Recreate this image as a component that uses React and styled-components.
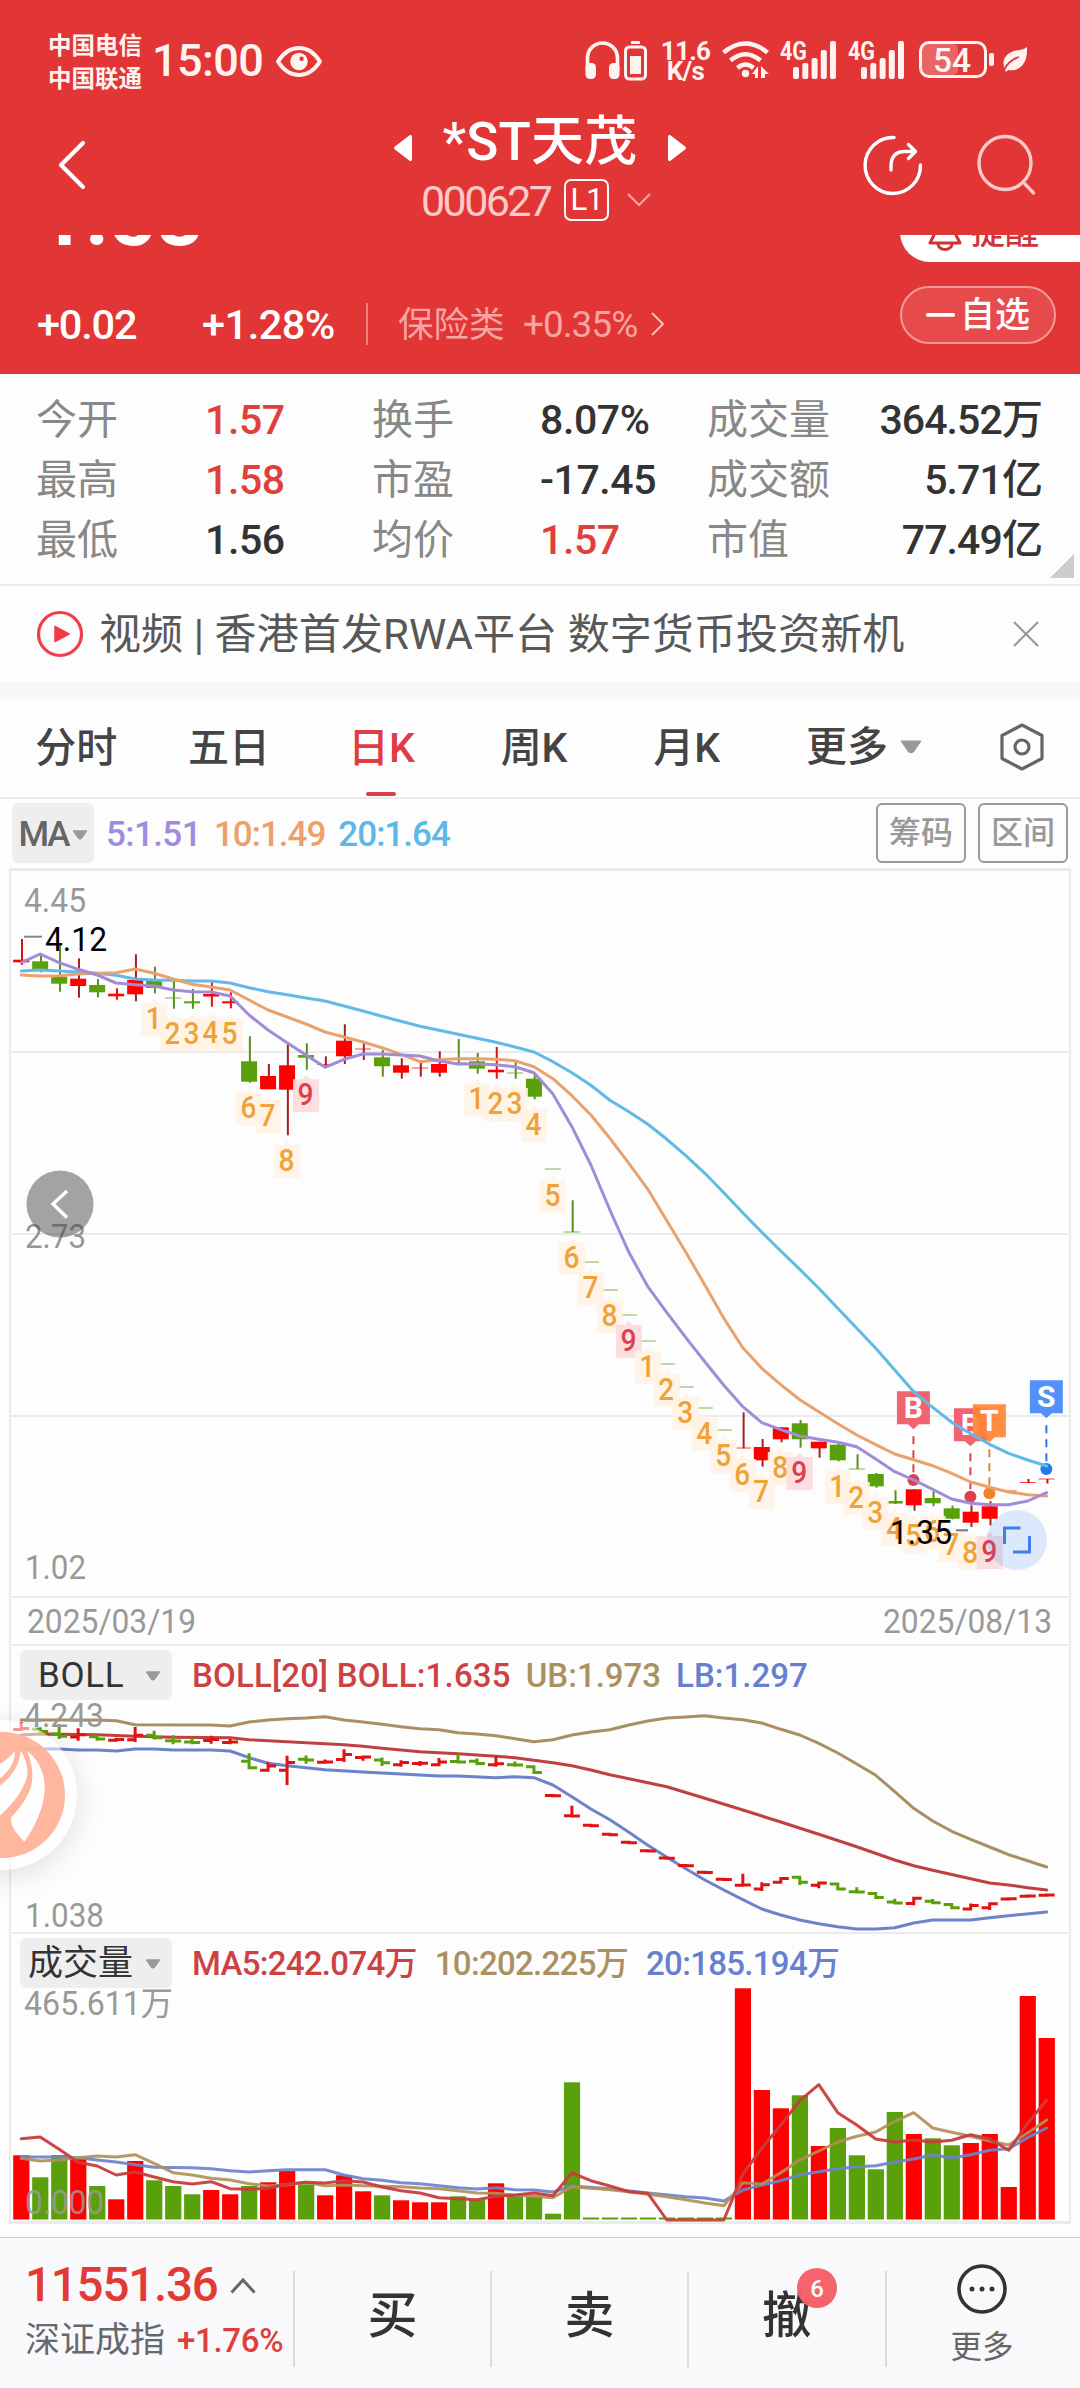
import React from 'react';
import styled, { createGlobalStyle } from 'styled-components';

const RED = '#e23536';
const UP = '#ff0000';
const DOWN = '#5aa00a';
const GRID = '#ebebeb';
const FONT = "Roboto, 'Noto Sans CJK SC', sans-serif";

const Global = createGlobalStyle`
  * { box-sizing: border-box; }
  body { margin: 0; background: #fdfdfd; font-family: ${FONT}; line-height: 1.2; }
  svg { display: block; flex: none; overflow: visible; }
`;

const Page = styled.div`
  width: 1080px;
  height: 2388px;
  display: flex;
  flex-direction: column;
  overflow: hidden;
  background: #fdfdfd;
`;

const Txt = styled.span`
  font-size: ${(p) => p.$s}px;
  letter-spacing: ${(p) => p.$ls || 0}px;
  color: ${(p) => p.$c || 'inherit'};
  font-weight: ${(p) => p.$w || 400};
  white-space: pre;
`;

/* ---------- header ---------- */
const Header = styled.header`
  height: 374px;
  background: ${RED};
  color: #fff;
  display: flex;
  flex-direction: column;
`;
const StatusBar = styled.div`
  height: 100px;
  padding: 30px 52px 0 48px;
  display: flex;
  justify-content: space-between;
  align-items: flex-start;
  color: #fff3f2;
`;
const StatusLeft = styled.div`
  display: flex;
  align-items: flex-start;
`;
const Carriers = styled.div`
  width: 96px;
  display: flex;
  flex-direction: column;
  font-size: 23.5px;
  font-weight: 700;
  line-height: 33px;
  white-space: nowrap;
`;
const Clock = styled.div`
  margin-left: 8px;
  width: 114px;
  font-size: 45px;
  font-weight: 500;
  letter-spacing: -0.6px;
  line-height: 62px;
`;
const EyeSlot = styled.div`
  margin: 16px 0 0 10px;
`;
const StatusRight = styled.div`
  display: flex;
  align-items: flex-start;
  padding-top: 11px;
`;
const Slot = styled.div`
  margin-left: ${(p) => p.$ml || 0}px;
  width: ${(p) => p.$w}px;
  padding-top: ${(p) => p.$pt || 0}px;
`;
const NetSpeed = styled.div`
  margin-left: 13px;
  width: 51px;
  display: flex;
  flex-direction: column;
  align-items: center;
  font-size: 26px;
  font-weight: 700;
  line-height: 20px;
  letter-spacing: -0.7px;
  white-space: nowrap;
`;
const NavBar = styled.div`
  height: 135px;
  padding: 10px 44px 5px 58px;
  display: grid;
  grid-template-columns: 336px 1fr 350px;
`;
const NavLeft = styled.div`
  display: flex;
  align-items: center;
  padding-bottom: 11px;
`;
const NavRight = styled.div`
  display: flex;
  align-items: center;
  justify-content: flex-end;
  gap: 54px;
  padding-bottom: 10px;
`;
const TitleCol = styled.div`
  display: flex;
  flex-direction: column;
`;
const TitleRow = styled.div`
  height: 60px;
  display: flex;
  align-items: center;
  justify-content: space-between;
  svg { margin-top: 16px; }
`;
const StockName = styled.h1`
  margin: 0;
  font-size: 53px;
  font-weight: 500;
  line-height: 60px;
  padding-top: 4px;
  letter-spacing: 0.2px;
  white-space: nowrap;
`;
const CodeRow = styled.div`
  height: 60px;
  display: flex;
  align-items: center;
  padding-left: 27px;
`;
const CodeText = styled.div`
  width: 143px;
  font-size: 43px;
  letter-spacing: -2.6px;
  padding-top: 3px;
  color: #fbc9c6;
`;
const LevelBox = styled.div`
  width: 45px;
  height: 42px;
  border: 2px solid #fff;
  border-radius: 7px;
  display: flex;
  align-items: center;
  justify-content: center;
  font-size: 31px;
  letter-spacing: -1px;
  margin-right: 18px;
`;
const ScrollPart = styled.div`
  height: 139px;
  overflow: hidden;
  display: flex;
  flex-direction: column;
  justify-content: flex-end;
  padding-bottom: 28px;
`;
const PriceRow = styled.div`
  display: flex;
  justify-content: space-between;
  align-items: flex-end;
  height: 60px;
  flex: none;
  margin-bottom: 22px;
`;
const Price = styled.div`
  padding-left: 38px;
  font-size: 83px;
  font-weight: 700;
  line-height: 60px;
  letter-spacing: -0.5px;
  margin-bottom: 15px;
`;
const RemindBtn = styled.div`
  width: 180px;
  height: 60px;
  border-radius: 30px 0 0 30px;
  background: #fff;
  color: #cf3339;
  display: flex;
  align-items: center;
  padding: 0 0 1px 28px;
  gap: 9px;
  font-size: 34px;
  font-weight: 500;
  line-height: 40px;
`;
const ChangeRow = styled.div`
  height: 62px;
  flex: none;
  display: flex;
  align-items: center;
  padding-left: 37px;
`;
const ChangeCell = styled.div`
  width: ${(p) => p.$w}px;
  font-size: ${(p) => p.$s}px;
  letter-spacing: ${(p) => p.$ls}px;
  font-weight: ${(p) => (p.$soft ? 400 : 500)};
  color: ${(p) => (p.$soft ? '#f6a5a3' : '#fff')};
  padding-top: 20px;
  white-space: nowrap;
`;
const HeadDivider = styled.div`
  width: 2px;
  height: 42px;
  margin: 17px 30px 0 0;
  background: #f0807f;
`;
const ArrowSlot = styled.div`
  padding-top: 17px;
`;
const WatchBtn = styled.div`
  margin-left: auto;
  margin-right: 24px;
  width: 156px;
  height: 58px;
  border: 2px solid #f29a99;
  border-radius: 29px;
  background: #e64a4b;
  display: flex;
  align-items: center;
  justify-content: center;
  gap: 5px;
  font-size: 35px;
  font-weight: 500;
  span { padding-top: 2px; }
`;

/* ---------- quote figures ---------- */
const Stats = styled.section`
  height: 212px;
  border-bottom: 2px solid ${GRID};
  padding-top: 16px;
  display: flex;
`;
const StatGrid = styled.div`
  display: grid;
  width: 1042px;
  padding-left: 36px;
  grid-template-columns: 169px 167px 168px 167px 131px 1fr;
  grid-auto-rows: 60px;
  font-size: 41px;
  line-height: 61px;
`;
const StatName = styled.div`
  color: #888;
  white-space: nowrap;
`;
const StatValue = styled.div`
  color: ${(p) => (p.$up ? '#e0403c' : '#333')};
  font-weight: 500;
  letter-spacing: ${(p) => (p.$right ? -0.9 : -0.4)}px;
  white-space: nowrap;
  text-align: ${(p) => (p.$right ? 'right' : 'left')};
`;
const Corner = styled.div`
  align-self: flex-end;
  margin: 0 0 6px 8px;
`;

/* ---------- news ---------- */
const News = styled.section`
  height: 96px;
  display: flex;
  align-items: center;
  padding: 0 41px 0 36px;
`;
const NewsText = styled.div`
  flex: 1;
  margin-left: 15px;
  padding-top: 2px;
  font-size: 42px;
  color: #585858;
  letter-spacing: 0.1px;
  white-space: nowrap;
`;
const Band = styled.div`
  height: 15px;
  background: #f7f7f7;
`;

/* ---------- tabs ---------- */
const Tabs = styled.nav`
  height: 102px;
  border-bottom: 2px solid ${GRID};
  display: flex;
`;
const Tab = styled.div`
  width: 152.6px;
  height: 99px;
  display: flex;
  flex-direction: column;
  align-items: center;
  justify-content: space-between;
  font-size: 41px;
  font-weight: 500;
  line-height: 88px;
  padding-top: 7px;
  color: ${(p) => (p.$on ? '#e03c46' : '#444')};
  &::after {
    content: '';
    width: 30px;
    height: 4px;
    border-radius: 2px;
    background: ${(p) => (p.$on ? '#d93f48' : 'transparent')};
  }
`;
const MoreTab = styled.div`
  padding-left: 43px;
  flex: 1;
  display: flex;
  align-items: center;
  gap: 12px;
  font-size: 41px;
  font-weight: 500;
  color: #444;
  span { padding-top: 2px; }
`;
const HexSlot = styled.div`
  padding-right: 35px;
  display: flex;
  align-items: center;
`;

/* ---------- chart ---------- */
const Toolbar = styled.div`
  height: 69px;
  padding: 4px 12px 5px 12px;
  display: flex;
  align-items: center;
`;
const MaPick = styled.div`
  width: 82px;
  height: 60px;
  border-radius: 6px;
  background: #eee;
  color: #666;
  font-size: 35px;
  font-weight: 500;
  letter-spacing: -2px;
  display: flex;
  align-items: center;
  justify-content: center;
  gap: 3px;
  padding-top: 3px;
`;
const MaValues = styled.div`
  flex: 1;
  display: flex;
  gap: 13px;
  padding: 4px 0 0 12px;
`;
const ToolBtn = styled.button`
  width: 90px;
  height: 60px;
  margin-left: 12px;
  border: 2px solid #999;
  border-radius: 6px;
  background: transparent;
  color: #999;
  font: 500 32px/52px ${FONT};
  padding: 0;
`;
const ChartArea = styled.section`
  position: relative;
  height: 1369px;
`;
const IndicatorBar = styled.div`
  position: absolute;
  left: 20px;
  top: ${(p) => p.$top}px;
  height: 50px;
  display: flex;
  align-items: center;
`;
const IndicatorPick = styled.div`
  width: 152px;
  height: 50px;
  border-radius: 6px;
  background: #eee;
  color: #333;
  font-size: 35px;
  letter-spacing: ${(p) => p.$ls || 0}px;
  display: flex;
  align-items: center;
  justify-content: space-between;
  padding: 1px 11px 0 ${(p) => p.$pl}px;
  margin-right: 20px;
`;
const Legend = styled.div`
  display: flex;
  gap: ${(p) => p.$gap}px;
  font-size: 33px;
  font-weight: 500;
  padding-top: 2px;
  white-space: nowrap;
`;
const LegendItem = styled.span`
  color: ${(p) => p.$c};
  letter-spacing: ${(p) => p.$ls || 0}px;
`;
const FloatLogo = styled.div`
  position: absolute;
  left: -73px;
  top: 852px;
  width: 150px;
  height: 150px;
  border-radius: 50%;
  background: rgba(255, 255, 255, 0.55);
  box-shadow: 0 6px 30px rgba(0, 0, 0, 0.12);
  padding: 12px;
`;

/* ---------- bottom bar ---------- */
const Footer = styled.footer`
  height: 151px;
  border-top: 1px solid #cfcfd2;
  background: #f9f9fc;
  display: grid;
  grid-template-columns: 293px 197px 197px 198px 195px;
`;
const IndexCell = styled.div`
  padding: 21px 0 0 25px;
`;
const IndexRow = styled.div`
  display: flex;
  align-items: center;
  height: ${(p) => p.$h}px;
  gap: ${(p) => p.$gap}px;
`;
const Action = styled.div`
  display: flex;
  justify-content: center;
  align-items: center;
  font-size: 50px;
  line-height: 60px;
  font-weight: 500;
  color: #333;
  margin: 33px 0;
  padding-bottom: 7px;
  border-left: 2px solid #dcdcdf;
`;
const ActionLabel = styled.span`
  position: relative;
`;
const Badge = styled.span`
  position: absolute;
  left: 35px;
  top: -18px;
  width: 40px;
  height: 40px;
  border-radius: 50%;
  background: #f65f69;
  opacity: 0.97;
  color: #fff;
  font-size: 24px;
  line-height: 42px;
  text-align: center;
`;
const MoreCell = styled.div`
  margin: 33px 0;
  border-left: 2px solid #dcdcdf;
  display: flex;
  flex-direction: column;
  align-items: center;
  justify-content: flex-start;
  gap: 15px;
  padding-right: 3px;
  font-size: 31.5px;
  line-height: 38px;
  color: #666;
  svg { margin-top: -7px; }
`;

/* ---------- data (vertical positions, in chart pixels) ---------- */
const cx = (i) => 21.2 + i * 18.99;

// direction, high, low, body top, body bottom
const candles = [
  ['u', 939, 965, 959.7, 962.3], ['d', 955.7, 972.3, 961.3, 969], ['d', 945.7, 991.7, 976.7, 983.7],
  ['u', 958.3, 997.7, 978.7, 986], ['d', 979, 997.3, 985, 992.3], ['u', 988.3, 999.7, 993.7, 996.3],
  ['u', 954.3, 1001.3, 980, 994.3], ['d', 966.7, 993.3, 980.7, 988], ['d', 980, 1008.7, 997.5, 998.5],
  ['d', 989, 1008.7, 1001.3, 1003.3], ['u', 982.3, 1006.7, 994, 996.5], ['u', 992.3, 1008.3, 1001.3, 1003.3],
  ['d', 1036.3, 1082.7, 1061.3, 1081.7], ['u', 1064, 1089, 1076, 1089.3], ['u', 1044.3, 1135.3, 1065.3, 1089.7],
  ['d', 1043.3, 1069.7, 1055, 1057.7], ['u', 1056.3, 1067.7, 1064, 1065], ['u', 1024.3, 1064, 1040.7, 1056.3],
  ['u', 1043.3, 1060, 1048.5, 1049.5], ['d', 1050, 1076.7, 1057.3, 1066.3], ['u', 1058.3, 1078.7, 1065.3, 1072.7],
  ['u', 1060.7, 1076.7, 1067.5, 1068.5], ['u', 1051.3, 1076.7, 1064, 1072.7], ['d', 1039, 1065.3, 1062.5, 1063.5],
  ['d', 1053, 1073.7, 1061.3, 1068.7], ['u', 1047, 1078.7, 1069.7, 1072.3], ['d', 1062, 1078.7, 1072.5, 1073.5],
  ['d', 1074, 1099.3, 1078.7, 1096.7], ['d', 1169, 1169, 1168.5, 1169.5], ['d', 1200.3, 1232, 1231.5, 1232.5],
  ['d', 1262, 1262, 1261.5, 1262.5], ['d', 1290, 1290, 1289.5, 1290.5], ['d', 1315, 1315, 1314.5, 1315.5],
  ['d', 1341, 1341, 1340.5, 1341.5], ['d', 1364, 1364, 1363.5, 1364.5], ['d', 1387, 1387, 1386.5, 1387.5],
  ['d', 1408, 1408, 1407.5, 1408.5], ['d', 1430, 1430, 1429.5, 1430.5], ['u', 1412.3, 1448.3, 1447.5, 1448.5],
  ['u', 1439, 1466.7, 1447, 1460.3], ['u', 1427.3, 1442.3, 1427.3, 1439.3], ['d', 1420, 1447.7, 1423.3, 1439.3],
  ['u', 1441.7, 1457.7, 1441.7, 1448.3], ['d', 1444, 1461.3, 1444.7, 1460.3], ['d', 1454.3, 1469, 1468.5, 1469.5],
  ['d', 1473, 1487.7, 1474, 1486.3], ['d', 1490.3, 1504, 1501, 1503.5], ['u', 1489.3, 1510.7, 1489.3, 1505.3],
  ['d', 1491.3, 1506.3, 1498, 1503.3], ['d', 1505.7, 1519.3, 1508.3, 1518.7], ['u', 1505.3, 1527, 1511.7, 1522.7],
  ['u', 1501.3, 1525.3, 1506.3, 1518.7], ['u', 1491, 1491, 1490.5, 1491.5], ['u', 1479, 1483, 1482, 1483],
  ['u', 1479, 1483.5, 1478.5, 1479.5],
];

const ma5 = [962.7, 954, 962.7, 969.3, 975, 983, 984.7, 986, 990, 991.7, 992, 996, 1015, 1030, 1042.7, 1055, 1067.3, 1059.3, 1054, 1054, 1055, 1056, 1061, 1064, 1064, 1064.7, 1066.7, 1072.7, 1094, 1126.7, 1165, 1210, 1252.3, 1286.7, 1312.7, 1337.7, 1361.7, 1385.3, 1406.7, 1422.7, 1429.7, 1436, 1439.3, 1442.3, 1446.7, 1459, 1471.7, 1480, 1489.3, 1499, 1503.3, 1504.7, 1504.7, 1501, 1492.7];
const ma10 = [975, 976, 975.7, 974, 973.3, 972.7, 969, 973.3, 979, 984.3, 987, 990, 1000, 1010, 1017, 1024, 1032, 1037, 1042, 1047.7, 1054.3, 1061.7, 1059.7, 1058.7, 1058.7, 1059.3, 1060.7, 1066.7, 1078.7, 1095.7, 1115, 1138.3, 1163.3, 1189.3, 1220.7, 1252.3, 1285, 1318.3, 1347.7, 1368.3, 1384.7, 1399.7, 1411.7, 1423.7, 1435, 1444.7, 1454, 1459.7, 1465.7, 1473.3, 1482, 1487.3, 1492, 1494.7, 1496];
const ma20 = [971, 970, 971, 972, 973.3, 975.3, 979, 980, 980.3, 981, 981, 983, 987.7, 991.7, 994.7, 998, 1001, 1006, 1011, 1016.3, 1021.3, 1026.3, 1030.3, 1034.3, 1038.3, 1042.3, 1047, 1052, 1061.7, 1072.7, 1085.3, 1100.3, 1111.7, 1124.3, 1139.3, 1155.7, 1173.3, 1192.7, 1212.7, 1232.3, 1251, 1269.3, 1288.3, 1308.3, 1328.3, 1348.3, 1370, 1391.7, 1407.3, 1422.3, 1433.7, 1444.3, 1453.3, 1460, 1466];

const counts = [
  [7, 1, 1018.3], [8, 2, 1033.3], [9, 3, 1033.3], [10, 4, 1031.7], [11, 5, 1033.3], [12, 6, 1107.3], [13, 7, 1115],
  [14, 8, 1160], [15, 9, 1094.3], [24, 1, 1098.3], [25, 2, 1103], [26, 3, 1103], [27, 4, 1124.3], [28, 5, 1194.7],
  [29, 6, 1257], [30, 7, 1287], [31, 8, 1315], [32, 9, 1340], [33, 1, 1366], [34, 2, 1389], [35, 3, 1412],
  [36, 4, 1432.7], [37, 5, 1455], [38, 6, 1474], [39, 7, 1491], [40, 8, 1467], [41, 9, 1472], [43, 1, 1486],
  [44, 2, 1497], [45, 3, 1512], [46, 4, 1528], [47, 5, 1535], [48, 6, 1531], [49, 7, 1544], [50, 8, 1552], [51, 9, 1551],
];

const flags = [
  { i: 47, t: 'B', top: 1391.3, dot: 1480, box: '#f25563', ink: '#d9414e' },
  { i: 50, t: 'B', top: 1408.3, dot: 1496.7, box: '#f25563', ink: '#d9414e' },
  { i: 51, t: 'T', top: 1404.3, dot: 1493.3, box: '#ff8433', ink: '#f5822a', dash: '#c98b4c' },
  { i: 54, t: 'S', top: 1380.3, dot: 1469, box: '#4288f8', ink: '#2378ec' },
];

const bollUp = [[0, 1720], [4, 1720], [5, 1720.7], [6, 1724.7], [10, 1725], [11, 1726], [12, 1722], [13, 1720], [14, 1718.7], [15, 1718], [16, 1716.7], [17, 1720], [18, 1722], [19, 1724.3], [20, 1726.7], [21, 1728.7], [22, 1729.7], [23, 1732.7], [24, 1734], [25, 1735.7], [26, 1738.7], [27, 1741.7], [28, 1739.7], [29, 1735], [30, 1732], [31, 1729.7], [32, 1725], [33, 1721], [34, 1718], [35, 1717], [36, 1715.7], [37, 1718], [38, 1719.7], [39, 1723], [40, 1729.3], [41, 1735], [42, 1743.3], [43, 1753], [44, 1764], [45, 1775.3], [46, 1791.7], [47, 1808.3], [48, 1821], [49, 1831.3], [50, 1839.3], [51, 1847], [52, 1854.7], [53, 1860.7], [54, 1867]];
const bollMid = [[0, 1735], [1, 1734], [4, 1734.7], [6, 1736.3], [8, 1737.3], [11, 1737.7], [12, 1739.7], [14, 1741.7], [17, 1744.7], [18, 1746.3], [19, 1748.3], [21, 1751.7], [23, 1753.7], [25, 1756.3], [26, 1757.7], [27, 1760.3], [28, 1762.7], [29, 1765.7], [30, 1770], [31, 1774.7], [32, 1778.7], [34, 1786.7], [36, 1798.3], [38, 1810], [40, 1822], [42, 1834.3], [44, 1846.7], [46, 1860], [47, 1865.7], [48, 1870.3], [50, 1878.7], [51, 1883], [52, 1885], [53, 1887.7], [54, 1890]];
const bollLow = [[0, 1748.7], [2, 1749], [3, 1750], [4, 1750], [5, 1751], [6, 1749], [7, 1749], [8, 1750], [10, 1750], [11, 1751], [12, 1757.7], [13, 1763.3], [14, 1765.7], [15, 1767.7], [16, 1769.7], [18, 1772], [20, 1774], [22, 1776], [23, 1776], [25, 1777.7], [26, 1776.7], [27, 1777.7], [28, 1785], [29, 1796.7], [30, 1809], [31, 1819.7], [32, 1832.3], [33, 1845.3], [34, 1857.3], [35, 1868.7], [36, 1880], [37, 1890], [38, 1899.7], [39, 1909], [40, 1915], [41, 1920], [42, 1923.7], [43, 1926.7], [44, 1929], [45, 1929], [46, 1927.7], [47, 1923], [48, 1920], [50, 1920], [51, 1917.7], [54, 1912]];

const volTop = [2155.3, 2177.3, 2155, 2158.7, 2186, 2199.3, 2161, 2180.3, 2186, 2194.3, 2190, 2194.3, 2186, 2182.3, 2171, 2184.3, 2195.3, 2175.3, 2191.3, 2195.3, 2200.3, 2202.3, 2202.3, 2196.3, 2200, 2183.3, 2195.3, 2196.3, 2213.7, 2082.3, 2217.5, 2217.5, 2217.5, 2217.5, 2217.5, 2217.5, 2217.5, 2217.5, 1988.3, 2090, 2108.3, 2095.3, 2146, 2128, 2155.3, 2169.3, 2112, 2134, 2138.3, 2145.3, 2143, 2134, 2187, 1996, 2038];
const vol5 = [[0, 2138.7], [1, 2137], [2, 2149.3], [3, 2162.3], [4, 2166], [5, 2175], [6, 2172], [7, 2177], [8, 2181.7], [9, 2184], [10, 2181.7], [11, 2188.7], [12, 2189.3], [13, 2188.3], [14, 2184.3], [15, 2182.3], [16, 2183], [17, 2180.7], [18, 2182], [19, 2187], [20, 2190.7], [21, 2193], [22, 2197.7], [23, 2198.7], [24, 2199.7], [25, 2196.3], [26, 2195], [27, 2193], [28, 2195.7], [29, 2173], [30, 2180.7], [31, 2186], [32, 2191.7], [33, 2193.3], [34, 2220], [37, 2220], [38, 2174], [39, 2148.3], [40, 2125], [41, 2100.7], [42, 2084.7], [43, 2112.7], [44, 2125], [45, 2139], [46, 2142], [47, 2140], [48, 2142], [49, 2140.3], [50, 2134.7], [51, 2139], [52, 2150.3], [53, 2123.3], [54, 2100]];
const vol10 = [[0, 2158.3], [1, 2161], [2, 2160], [3, 2157.7], [4, 2156], [5, 2157], [6, 2154.7], [7, 2163.3], [8, 2172.7], [9, 2175], [10, 2178.3], [11, 2180], [12, 2183.7], [13, 2186], [14, 2184.7], [15, 2182.3], [16, 2185.7], [17, 2185], [18, 2185.7], [20, 2186.7], [21, 2188], [22, 2188.7], [23, 2190.7], [24, 2193], [25, 2193.3], [26, 2195.3], [27, 2196.3], [28, 2197.7], [29, 2186.7], [30, 2188.3], [31, 2189.7], [32, 2191.7], [33, 2194.3], [34, 2196.7], [35, 2199.7], [36, 2203], [37, 2205.7], [38, 2182.7], [39, 2184], [40, 2172.7], [41, 2160], [42, 2151], [43, 2142], [44, 2136.3], [45, 2132], [46, 2121.3], [47, 2112.7], [48, 2128], [49, 2132.3], [50, 2136.3], [51, 2141], [52, 2145], [53, 2133], [54, 2120]];
const vol20 = [[0, 2157], [2, 2157], [3, 2157.7], [4, 2160], [5, 2162], [6, 2164.7], [7, 2167.3], [9, 2167.7], [10, 2168.7], [11, 2170.7], [12, 2172], [13, 2170.7], [14, 2169.7], [16, 2169.7], [17, 2175], [18, 2178.7], [19, 2180.3], [20, 2182.7], [21, 2183.7], [22, 2185.7], [23, 2187.7], [24, 2189], [25, 2187.7], [26, 2189.7], [27, 2190], [28, 2192], [29, 2186], [31, 2188.7], [33, 2193], [35, 2196.7], [36, 2198], [37, 2201], [38, 2190], [39, 2185], [40, 2180.7], [41, 2175], [42, 2171.7], [43, 2168.7], [44, 2166.7], [45, 2165.7], [46, 2162], [47, 2159], [48, 2155], [49, 2158], [50, 2154.7], [51, 2150.3], [52, 2148.7], [53, 2137.7], [54, 2128]];

const pts = (a) => a.map((v, i) => (Array.isArray(v) ? `${cx(v[0])},${v[1]}` : `${cx(i)},${v}`)).join(' ');

const Line = ({ data, color, o }) => (
  <polyline points={pts(data)} fill="none" stroke={color} strokeWidth="3" strokeLinejoin="round" strokeLinecap="round" opacity={o || 1} />
);

const Label = ({ x, y, w, c = '#999', s = 33, weight = 400, children }) => (
  <text x={x} y={y} textLength={w} lengthAdjust="spacingAndGlyphs" fontSize={s} fontWeight={weight} fill={c} fontFamily={FONT}>
    {children}
  </text>
);

const Candle = ({ i, c }) => {
  const [dir, hi, lo, t, b] = c;
  const flat = b - t < 1.5;
  const col = dir === 'u' ? UP : DOWN;
  const wick = dir === 'u' ? (b - t < 4 && !flat ? '#e01010' : '#a51f1f') : '#58901c';
  return (
    <g>
      {lo - hi > 1 && <line x1={cx(i) + 0.8} x2={cx(i) + 0.8} y1={hi} y2={lo} stroke={wick} strokeWidth="2" />}
      <rect x={cx(i) - 8} y={t} width="16" height={b - t} fill={col} opacity={flat ? 0.75 : 1} />
    </g>
  );
};

const Count = ({ i, n, y }) => {
  const hot = n === 9;
  const x = cx(i);
  return (
    <g>
      <path
        d={`M${x - 13} ${y - 15}h9l4 -4l4 4h9v33h-26z`}
        fill={hot ? '#fcd9dc' : '#fff2e4'}
        opacity="0.88"
      />
      <text x={x - 0.5} y={y + 11} textAnchor="middle" fontSize="31" fontWeight="500" fill={hot ? '#dc3f4e' : '#efa23a'} fontFamily={FONT} textLength="16" lengthAdjust="spacingAndGlyphs">
        {n}
      </text>
    </g>
  );
};

const Flag = ({ f }) => {
  const x = cx(f.i) - 0.3;
  return (
    <g>
      <line x1={x} x2={x} y1={f.top + 45} y2={f.dot} stroke={f.dash || f.ink} strokeWidth="2" strokeDasharray="8 6" />
      <circle cx={x} cy={f.dot} r="6" fill={f.ink} />
      <path d={`M${x - 16.5} ${f.top}h33v33h-11l-5.500 5l-5.500 -5h-11z`} fill={f.box} opacity="0.92" />
      <text x={x} y={f.top + 27} textAnchor="middle" fontSize="30" fontWeight="700" fill="#fff" fontFamily={FONT}>
        {f.t}
      </text>
    </g>
  );
};

const toBoll = (y) => 1795.7 + (y - 1169) * 0.3205;
const OhlcBar = ({ i, c }) => {
  const [dir, hi, lo, t, b] = c;
  const flat = hi === lo;
  const up = dir === 'u' || (i >= 28 && i <= 37);
  const x = cx(i);
  const open = toBoll(dir === 'u' ? b : t);
  const close = toBoll(dir === 'u' ? t : b);
  const low = Math.max(toBoll(lo), open + 1, close + 1);
  return (
    <path
      d={`M${x - 8} ${open}H${x}V${close}H${x + 8}${flat ? '' : `M${x} ${toBoll(hi)}V${low}`}`}
      stroke={up ? '#e01212' : DOWN}
      strokeWidth="3"
      fill="none"
    />
  );
};

const Chart = () => (
  <svg width="1080" height="1369" viewBox="0 868 1080 1369">
    <g fill="none" stroke={GRID} strokeWidth="2">
      <path d="M9 869.5H1071" strokeWidth="3" />
      <path d="M10 868V2224M1070 868V2224" />
      <path d="M10 1052H1070M10 1234H1070M10 1416H1070M10 1597H1070M10 1645H1070M10 1933H1070" />
      <path d="M9 2222.5H1071" strokeWidth="3" />
    </g>

    <Label x={24} y={912} w={62}>4.45</Label>
    <Label x={25} y={1579} w={61}>1.02</Label>
    <Label x={27} y={1633} w={169}>2025/03/19</Label>
    <Label x={883} y={1633} w={169}>2025/08/13</Label>

    {candles.map((c, i) => <Candle key={i} i={i} c={c} />)}
    <path d="M24 936.7H42" stroke="#888" strokeWidth="2" />
    <Label x={45} y={951} w={62} c="#000">4.12</Label>
    {counts.map(([i, n, y]) => <Count key={i} i={i} n={n} y={y} />)}
    <path d="M956 1530.3H968" stroke="#777" strokeWidth="2" />
    {flags.map((f) => <Flag key={f.i} f={f} />)}
    <Line data={ma20} color="#62b9e6" />
    <Line data={ma10} color="#eaa26c" />
    <Line data={ma5} color="#a28bd9" />
    <Label x={890} y={1544} w={62} c="#000">1.35</Label>

    <circle cx="60" cy="1204" r="33.5" fill="#000" opacity="0.355" />
    <path d="M67 1191L53 1204L67 1217.5" fill="none" stroke="#fff" strokeWidth="3.4" />
    <Label x={25} y={1248} w={61} c="rgba(70,70,70,.58)">2.73</Label>
    <circle cx="1017" cy="1540" r="30" fill="#3b82f6" opacity="0.17" />
    <path d="M1004.5 1544V1528H1020.5M1029.5 1536V1552H1013" fill="none" stroke="#3f7fe6" strokeWidth="3" />

    <Line data={bollUp} color="#a98f62" />
    <Line data={bollMid} color="#bf4040" />
    <Line data={bollLow} color="#6c83cb" />
    {candles.map((c, i) => <OhlcBar key={i} i={i} c={c} />)}
    <Label x={24} y={1727} w={80}>4.243</Label>
    <Label x={25} y={1926.7} w={79}>1.038</Label>

    {volTop.map((t, i) => (
      <rect key={i} x={cx(i) - 8} y={t} width="16.2" height={2219.5 - t} fill={candles[i][0] === 'u' ? UP : DOWN} />
    ))}
    <Line data={vol20} color="#6c83cb" o={0.92} />
    <Line data={vol10} color="#b09058" o={0.92} />
    <Line data={vol5} color="#c93c3c" o={0.95} />
    <Label x={24} y={2015} w={149}>465.611万</Label>
    <Label x={25} y={2214} w={79} c="rgba(153,153,153,.85)">0.000</Label>
  </svg>
);

/* ---------- icons ---------- */
const Caret = ({ w = 16, h = 10, c = '#999' }) => (
  <svg width={w} height={h} viewBox="0 0 14 9">
    <path d="M1 .8h12L8.600 7.200Q7 8.800 5.400 7.200z" fill={c} stroke={c} strokeWidth="1" strokeLinejoin="round" />
  </svg>
);

const Eye = () => (
  <svg width="46" height="31" viewBox="0 0 46 31" fill="none">
    <path d="M2 15.500C8 6 15 2 23 2s15 4 21 13.500C38 25 31 29 23 29S8 25 2 15.500z" stroke="#fff3f2" strokeWidth="4" strokeLinejoin="round" />
    <circle cx="23" cy="15.500" r="8.700" fill="#fff3f2" />
    <circle cx="25.600" cy="12.800" r="2.200" fill={RED} />
  </svg>
);

const Signal = () => (
  <svg width="58" height="39" viewBox="0 0 58 39" fill="#fff3f2">
    <text x="0" y="18.500" fontSize="25.500" fontWeight="700" fontFamily={FONT} textLength="27" lengthAdjust="spacingAndGlyphs">4G</text>
    <rect x="13" y="26" width="6" height="12" rx="2" />
    <rect x="22.300" y="22" width="6" height="16" rx="2" />
    <rect x="31.600" y="17" width="6" height="21" rx="2" />
    <rect x="40.800" y="9" width="6" height="29" rx="2" />
    <rect x="50" y="0" width="6" height="38" rx="2" />
  </svg>
);

export default function App() {
  return (
    <>
      <Global />
      <Page>
        <Header>
          <StatusBar>
            <StatusLeft>
              <Carriers><span>中国电信</span><span>中国联通</span></Carriers>
              <Clock>15:00</Clock>
              <EyeSlot><Eye /></EyeSlot>
            </StatusLeft>
            <StatusRight>
              <Slot $w={34}>
                <svg width="35" height="39" viewBox="0 0 35 39" fill="none">
                  <path d="M2.500 30V17a15 15 0 0 1 30 0V30" stroke="#fff3f2" strokeWidth="3.600" />
                  <rect x=".5" y="22" width="10.500" height="16" rx="4.500" fill="#fff3f2" />
                  <rect x="24" y="22" width="10.500" height="16" rx="4.500" fill="#fff3f2" />
                </svg>
              </Slot>
              <Slot $w={23} $ml={5}>
                <svg width="23" height="40" viewBox="0 0 23 40">
                  <rect x="7" y="0" width="9" height="3" rx="1" fill="#fff3f2" />
                  <rect x="1.500" y="6" width="20" height="32" rx="4" fill="none" stroke="#fff3f2" strokeWidth="3" />
                  <rect x="6" y="15" width="11" height="18" fill="#fff3f2" />
                </svg>
              </Slot>
              <NetSpeed><span>11.6</span><span>K/s</span></NetSpeed>
              <Slot $w={48} $ml={11}>
                <svg width="48" height="39" viewBox="0 0 48 39" fill="none">
                  <g stroke="#fff3f2" strokeWidth="4.500">
                    <path d="M1.500 11.500Q23.500 -6.500 45.500 11.500" />
                    <path d="M8.500 19.500Q23.500 7 38.500 19.500" />
                    <path d="M15.500 27Q23.500 20 31.500 27" />
                  </g>
                  <circle cx="23.500" cy="32.500" r="3.700" fill="#fff3f2" />
                  <path d="M30 33l6 -8v12h-3v-4zM39 25l8 8h-4v4h-4z" fill="#fff3f2" />
                </svg>
              </Slot>
              <Slot $w={58} $ml={10}><Signal /></Slot>
              <Slot $w={58} $ml={10}><Signal /></Slot>
              <Slot $w={77} $ml={13}>
                <svg width="77" height="38" viewBox="0 0 77 38">
                  <rect x="3" y="3" width="36" height="31" rx="5" fill="#e96565" />
                  <rect x="1.500" y="1.500" width="65" height="34" rx="8.500" fill="none" stroke="#fff3f2" strokeWidth="3" />
                  <rect x="70" y="12" width="5" height="13" rx="2" fill="#fff3f2" />
                  <text x="14" y="30.500" fontSize="34" fontWeight="500" fill="#fff3f2" fontFamily={FONT} textLength="38" lengthAdjust="spacingAndGlyphs">54</text>
                </svg>
              </Slot>
              <Slot $w={26} $ml={6} $pt={6}>
                <svg width="26" height="26" viewBox="0 0 26 26">
                  <path d="M25 0C26 16 18 25 6 23L4 25Q-2 14 6 7Q12 3 18 3Q23 2 25 0z" fill="#fff3f2" />
                  <path d="M2 23Q7 13 17 10" stroke={RED} strokeWidth="1.800" fill="none" />
                </svg>
              </Slot>
            </StatusRight>
          </StatusBar>

          <NavBar>
            <NavLeft>
              <svg width="28" height="50" viewBox="0 0 28 50" fill="none" stroke="#fff" strokeWidth="4.200" strokeLinecap="round" strokeLinejoin="round">
                <path d="M25 3L3 25L25 47" />
              </svg>
            </NavLeft>
            <TitleCol>
              <TitleRow>
                <svg width="18" height="26" viewBox="0 0 18 26">
                  <path d="M16.500 1.500v23L1.500 13z" fill="#fff" stroke="#fff" strokeWidth="3" strokeLinejoin="round" />
                </svg>
                <StockName>*ST天茂</StockName>
                <svg width="18" height="26" viewBox="0 0 18 26">
                  <path d="M1.500 1.500v23L16.500 13z" fill="#fff" stroke="#fff" strokeWidth="3" strokeLinejoin="round" />
                </svg>
              </TitleRow>
              <CodeRow>
                <CodeText>000627</CodeText>
                <LevelBox>L1</LevelBox>
                <svg width="24" height="14" viewBox="0 0 24 14" fill="none" stroke="#f6a5a3" strokeWidth="2.200">
                  <path d="M1 1L12 12L23 1" />
                </svg>
              </CodeRow>
            </TitleCol>
            <NavRight>
              <svg width="60" height="60" viewBox="0 0 60 60" fill="none" stroke="#fff" strokeWidth="3.400" strokeLinecap="round" strokeLinejoin="round">
                <path d="M31 2.500A27.700 28 0 1 0 57.500 30" />
                <path d="M28 35V31Q28 16.500 42 16.500H52M45.500 9.500L52.500 16.500L45.500 23.500" />
              </svg>
              <svg width="59" height="60" viewBox="0 0 59 60" fill="none" stroke="#fbc9c6" strokeWidth="3.400" strokeLinecap="round">
                <ellipse cx="28" cy="28" rx="26" ry="26.500" />
                <path d="M48 49L56.500 58" />
              </svg>
            </NavRight>
          </NavBar>

          <ScrollPart>
            <PriceRow>
              <Price>1.58</Price>
              <RemindBtn>
                <svg width="34" height="38" viewBox="0 0 34 38" fill="none" stroke="#cf3339" strokeWidth="3" strokeLinejoin="round">
                  <path d="M2 30H32L28 22V15a11 11 0 0 0 -22 0V22z" />
                  <path d="M10 31a7 5.500 0 0 0 14 0" />
                </svg>
                <span>提醒</span>
              </RemindBtn>
            </PriceRow>
            <ChangeRow>
              <ChangeCell $w={165} $s={41.5} $ls={-1.2}>+0.02</ChangeCell>
              <ChangeCell $w={164} $s={41.5} $ls={-0.5}>+1.28%</ChangeCell>
              <HeadDivider />
              <ChangeCell $w={125} $s={35.5} $ls={0} $soft>保险类</ChangeCell>
              <ChangeCell $w={128} $s={37} $ls={-1} $soft>+0.35%</ChangeCell>
              <ArrowSlot>
                <svg width="14" height="24" viewBox="0 0 14 24" fill="none" stroke="#fbc0be" strokeWidth="2">
                  <path d="M1 1L12 12L1 23" />
                </svg>
              </ArrowSlot>
              <WatchBtn>
                <svg width="29" height="4" viewBox="0 0 29 4"><rect width="29" height="3.800" rx="1.500" fill="#fff" /></svg>
                <span>自选</span>
              </WatchBtn>
            </ChangeRow>
          </ScrollPart>
        </Header>

        <Stats>
          <StatGrid>
            <StatName>今开</StatName><StatValue $up>1.57</StatValue>
            <StatName>换手</StatName><StatValue>8.07%</StatValue>
            <StatName>成交量</StatName><StatValue $right>364.52万</StatValue>
            <StatName>最高</StatName><StatValue $up>1.58</StatValue>
            <StatName>市盈</StatName><StatValue>-17.45</StatValue>
            <StatName>成交额</StatName><StatValue $right>5.71亿</StatValue>
            <StatName>最低</StatName><StatValue>1.56</StatValue>
            <StatName>均价</StatName><StatValue $up>1.57</StatValue>
            <StatName>市值</StatName><StatValue $right>77.49亿</StatValue>
          </StatGrid>
          <Corner>
            <svg width="24" height="24" viewBox="0 0 24 24"><path d="M24 0V24H0z" fill="#ccc" /></svg>
          </Corner>
        </Stats>

        <News>
          <svg width="48" height="48" viewBox="0 0 48 48">
            <circle cx="24" cy="24" r="21.500" fill="none" stroke="#ee3f4b" strokeWidth="3.200" />
            <path d="M19 16.500L33 24L19 31.500z" fill="#f03a44" stroke="#f03a44" strokeWidth="1.500" strokeLinejoin="round" />
          </svg>
          <NewsText>视频 | 香港首发RWA平台 数字货币投资新机</NewsText>
          <svg width="26" height="26" viewBox="0 0 26 26" stroke="#999" strokeWidth="2.200">
            <path d="M1 1L25 25M25 1L1 25" />
          </svg>
        </News>
        <Band />

        <Tabs>
          <Tab>分时</Tab>
          <Tab>五日</Tab>
          <Tab $on>日K</Tab>
          <Tab>周K</Tab>
          <Tab>月K</Tab>
          <MoreTab><span>更多</span><Caret w={22} h={14} /></MoreTab>
          <HexSlot>
            <svg width="46" height="48" viewBox="0 0 46 48" fill="none" stroke="#666" strokeWidth="3.200" strokeLinejoin="round">
              <path d="M23 2L43 12.500V35.500L23 46L3 35.500V12.500z" />
              <circle cx="23" cy="24" r="7" />
            </svg>
          </HexSlot>
        </Tabs>

        <Toolbar>
          <MaPick><span>MA</span><Caret /></MaPick>
          <MaValues>
            <Txt $s={35} $c="#a28bdf" $w={500} $ls={-0.6}>5:1.51</Txt>
            <Txt $s={35} $c="#eca06a" $w={500} $ls={-1}>10:1.49</Txt>
            <Txt $s={35} $c="#5cb8e8" $w={500} $ls={-1}>20:1.64</Txt>
          </MaValues>
          <ToolBtn>筹码</ToolBtn>
          <ToolBtn>区间</ToolBtn>
        </Toolbar>

        <ChartArea>
          <Chart />
          <IndicatorBar $top={782}>
            <IndicatorPick $pl={18} $ls={0.7}><span>BOLL</span><Caret c="#999" /></IndicatorPick>
            <Legend $gap={15}>
              <LegendItem $c="#cc4242" $ls={0.2}>BOLL[20] BOLL:1.635</LegendItem>
              <LegendItem $c="#ab9160" $ls={0}>UB:1.973</LegendItem>
              <LegendItem $c="#6680cf" $ls={0}>LB:1.297</LegendItem>
            </Legend>
          </IndicatorBar>
          <IndicatorBar $top={1070}>
            <IndicatorPick $pl={8}><span>成交量</span><Caret c="#999" /></IndicatorPick>
            <Legend $gap={18}>
              <LegendItem $c="#cc4242" $ls={-0.7}>MA5:242.074万</LegendItem>
              <LegendItem $c="#ab9160" $ls={-0.7}>10:202.225万</LegendItem>
              <LegendItem $c="#6680cf" $ls={-0.7}>20:185.194万</LegendItem>
            </Legend>
          </IndicatorBar>
          <FloatLogo>
            <svg width="126" height="126" viewBox="-61 1732 126 126">
              <g opacity="0.92">
                <circle cx="2" cy="1795" r="63" fill="#ffb196" />
                <path d="M15 1750.700C10 1757 5 1762 -8 1768V1785C10 1772 15 1762 15 1750.700z" fill="#fff" />
                <path d="M20.700 1750.700C20 1764 12 1780 -10 1792V1824C10 1808 24 1792 27.500 1774Q28 1762 20.700 1750.700z" fill="#fff" />
                <path d="M27 1750.700C49 1768 53 1800 24.300 1842C17 1833 9 1826 11.500 1817C30 1797 39 1780 27 1750.700z" fill="#fff" />
              </g>
            </svg>
          </FloatLogo>
        </ChartArea>

        <Footer>
          <IndexCell>
            <IndexRow $h={53} $gap={12}>
              <Txt $s={47.5} $c="#e23b36" $w={500} $ls={-1.2}>11551.36</Txt>
              <svg width="26" height="16" viewBox="0 0 26 16" fill="none" stroke="#666" strokeWidth="3">
                <path d="M1.500 14.500L13 2L24.500 14.500" />
              </svg>
            </IndexRow>
            <IndexRow $h={57} $gap={12}>
              <Txt $s={35} $c="#666870">深证成指</Txt>
              <Txt $s={33} $c="#dd403c" $w={500} $ls={-0.3}>+1.76%</Txt>
            </IndexRow>
          </IndexCell>
          <Action>买</Action>
          <Action>卖</Action>
          <Action><ActionLabel>撤<Badge>6</Badge></ActionLabel></Action>
          <MoreCell>
            <svg width="50" height="50" viewBox="0 0 50 50">
              <circle cx="25" cy="25" r="23" fill="none" stroke="#333" strokeWidth="3.600" />
              <circle cx="15" cy="25" r="2.500" fill="#333" />
              <circle cx="25" cy="25" r="2.500" fill="#333" />
              <circle cx="35" cy="25" r="2.500" fill="#333" />
            </svg>
            <span>更多</span>
          </MoreCell>
        </Footer>
      </Page>
    </>
  );
}
